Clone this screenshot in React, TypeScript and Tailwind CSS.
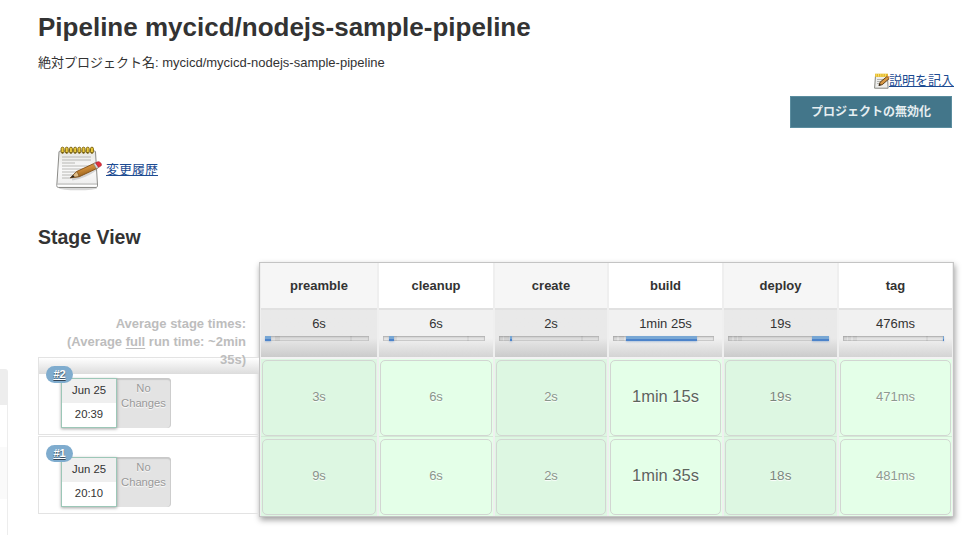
type Segment = { x: number; w: number };
type Stage = {
  name: string;
  width: string;
  average: string;
  bar: Segment;
  marks: Segment[];
  runs: string[];
  size: string;
};

const stages: Stage[] = [
  { name: "preamble", width: "w-[118px]", average: "6s", bar: { x: 0, w: 6 }, marks: [{ x: 10, w: 5 }, { x: 85, w: 2 }], runs: ["3s", "9s"], size: "text-[13px] leading-[71px] text-[#8a948b]" },
  { name: "cleanup", width: "w-[116px]", average: "6s", bar: { x: 6, w: 5 }, marks: [{ x: 11, w: 3 }, { x: 84, w: 2 }], runs: ["6s", "6s"], size: "text-[13px] leading-[71px] text-[#8a968c]" },
  { name: "create", width: "w-[114px]", average: "2s", bar: { x: 11, w: 2 }, marks: [{ x: 0, w: 4 }, { x: 5, w: 5 }, { x: 82, w: 2 }], runs: ["2s", "2s"], size: "text-[13px] leading-[71px] text-[#8a968c]" },
  { name: "build", width: "w-[115px]", average: "1min 25s", bar: { x: 13, w: 71 }, marks: [{ x: 0, w: 4 }, { x: 6, w: 5 }], runs: ["1min 15s", "1min 35s"], size: "text-[16.5px] leading-[70px] text-[#5c655d]" },
  { name: "deploy", width: "w-[115px]", average: "19s", bar: { x: 84, w: 17 }, marks: [{ x: 0, w: 4 }, { x: 6, w: 3 }, { x: 10, w: 4 }], runs: ["19s", "18s"], size: "text-[13.5px] leading-[71px] text-[#7b867d]" },
  { name: "tag", width: "w-[115px]", average: "476ms", bar: { x: 100, w: 1 }, marks: [{ x: 0, w: 4 }, { x: 5, w: 3 }, { x: 10, w: 4 }, { x: 83, w: 2 }], runs: ["471ms", "481ms"], size: "text-[13px] leading-[71px] text-[#8e9a90]" },
];

function NotepadLarge() {
  return (
    <svg className="block shrink-0" width="48" height="48" viewBox="-1 -1.5 48 48">
      <defs>
        <linearGradient id="paper" x1="0" y1="0" x2="0" y2="1">
          <stop offset="0" stopColor="#e6e6e3" />
          <stop offset="0.5" stopColor="#fafafa" />
          <stop offset="1" stopColor="#ececec" />
        </linearGradient>
        <linearGradient id="wood" x1="0" y1="0" x2="0.5" y2="1">
          <stop offset="0" stopColor="#e8b56b" />
          <stop offset="0.5" stopColor="#cf8d3a" />
          <stop offset="1" stopColor="#8f5915" />
        </linearGradient>
      </defs>
      <ellipse cx="22" cy="41.8" rx="19" ry="2" fill="#bcbcbc" opacity="0.6" />
      <path d="M4.5 4.5h34q1 0 1 1l2 33q0 2.5-1.5 2.5H2.5Q.7 41 .8 39L3 5.5q0-1 1.5-1z" fill="url(#paper)" stroke="#8b8b88" />
      <path d="M1.5 37.5h39.5" stroke="#b5b5b3" />
      <path d="M1.5 39.2h39.5" stroke="#fff" strokeWidth="1.5" />
      <path d="M6 10.5h29M6 13.5h29M6 16.5h13M6 19.5h29M6 22.5h27M6 25.5h24M6 28.5h17M6 31.5h9" stroke="#b1b1ae" strokeWidth="0.9" />
      {[6.5, 10.7, 14.9, 19.1, 23.3, 27.5, 31.7, 35.9].map((x) => (
        <g key={x}>
          <rect x={x - 1.4} y="0.7" width="2.9" height="6" rx="1.4" fill="#e9c93c" stroke="#806713" strokeWidth="1" />
          <circle cx={x} cy="6.3" r="0.8" fill="#665313" />
        </g>
      ))}
      <path d="M16 32.5q13-2 24-10" stroke="#555" strokeWidth="3" opacity="0.22" fill="none" />
      <path d="M14.5 31.3 20.5 25.1l18.5-8.6 2.8 5-18.5 8.7z" fill="url(#wood)" stroke="#815018" strokeWidth="0.9" />
      <path d="m14.5 31.3 6-6.2 1.7 2.3.8 2.6z" fill="#e0be89" stroke="#6f4616" strokeWidth="0.6" />
      <path d="m14.2 31.6 2.9-3.2 1.5 2.1z" fill="#292521" />
      <path d="m37.6 17.2 2.4-1.1 2.9 4.8-2.5 1.2z" fill="#d7d9dc" stroke="#858585" strokeWidth="0.6" />
      <path d="m39.5 16.3 2.5-1.1c2-.5 4.4 2.7 3.1 4.1l-2.6 1.5z" fill="#e3303d" stroke="#9d1825" strokeWidth="0.6" />
    </svg>
  );
}

function NotepadSmall() {
  return (
    <svg className="block shrink-0" width="16" height="16" viewBox="0 0 16 16">
      <path d="M1.5 2.5h12l.6 12.7H.6z" fill="#eeeeec" stroke="#85857f" />
      <path d="M3 6.5h7M3 8.5h5M3 10.5h3" stroke="#b4b4b0" />
      <path d="M1 2.3h13" stroke="#e4b72a" strokeWidth="3.2" />
      <path d="M2.2.9v2.7M4.5.9v2.7M6.8.9v2.7M9.1.9v2.7M11.4.9v2.7" stroke="#fff08b" strokeWidth="0.7" />
      <path d="m5 12.4 1.2-3.3 6.6-5.4 2.3 2-6.9 6z" fill="#d79743" stroke="#5f401c" />
      <path d="m4.6 12.9.7-2.3 1.7 1.5z" fill="#2b241c" />
      <path d="m12.4 3.8 1.2-1q1.5.5 1.9 2l-1 1z" fill="#c5803a" />
    </svg>
  );
}

function RunRow({ id, time, first }: { id: string; time: string; first?: boolean }) {
  return (
    <div className="relative h-[78px] border border-r-0 border-[#e3e3e3] pt-[20px] pl-[22px]">
      {first && <div className="absolute inset-x-0 top-0 -z-10 h-[16px] bg-gradient-to-b from-white to-[#dcdcdc]" />}
      <div className="flex h-[50px]">
        <div className="z-[1] w-[56px] border border-[#9cc7b7] bg-white text-center text-[11.3px] text-[#333] shadow-[0_1px_3px_rgba(0,0,0,0.35)]">
          <div className="h-[24px] bg-[#efefef] leading-[23px]">Jun 25</div>
          <div className="h-[24px] leading-[23px]">{time}</div>
        </div>
        <div className="-ml-px w-[55px] rounded-r-[4px] bg-[#e3e3e3] pt-[3px] text-center text-[11.2px] leading-[15px] text-[#999] shadow-[inset_0_2px_1px_#c9c9c9,inset_-1px_0_0_#cecece] [text-shadow:0_1px_1px_white]">
          No<br />Changes
        </div>
      </div>
      <a className="absolute top-[8px] left-[7px] z-[2] h-[17px] w-[27px] rounded-full bg-[#7facce] text-center text-[11px] leading-[17px] font-bold text-white underline [text-shadow:0_1px_1px_#345]">{id}</a>
    </div>
  );
}

function StageColumn({ stage, index }: { stage: Stage; index: number }) {
  const odd = index % 2 === 0;
  return (
    <div className={`${stage.width} shrink-0 text-center ${odd ? "bg-[#ddf7e2]" : "bg-[#e4ffe8]"} border-x border-[#efefef]`}>
      <div className={`h-[45px] text-[13px] leading-[45px] font-bold ${odd ? "bg-[#f6f6f6]" : "bg-white"}`}>{stage.name}</div>
      <div className={`h-[49px] border-t-2 border-[#e1e1e1] bg-gradient-to-b px-[4px] ${odd ? "from-[#e9e9e9] from-60% to-[#cbcbcb]" : "from-[#f1f1f1] from-60% to-[#d4d4d4]"}`}>
        <div className="h-[26px] text-[13px] leading-[27px]">{stage.average}</div>
        <div className={`relative mr-[4px] h-[5px] shadow-[inset_0_1px_2px_#b0b0b0,inset_0_0_0_1px_#cbcbcb] ${odd ? "bg-[#dedede]" : "bg-[#e5e5e5]"}`}>
          {stage.marks.map((m) => (
            <i key={m.x} className="absolute inset-y-0 bg-black/5" style={{ left: m.x, width: m.w }} />
          ))}
          <i className="absolute inset-y-0 bg-gradient-to-b from-[#78a7d4] from-50% to-[#4c83ca] to-60% shadow-[0_1px_2px_rgba(70,120,190,0.35)]" style={{ left: stage.bar.x, width: stage.bar.w }} />
        </div>
      </div>
      <div className="h-[2px] bg-[#f3f3f3]" />
      {stage.runs.map((run, i) => (
        <div key={run + i} className={`px-px ${i === 0 ? "h-[78px] border-b border-[#d4e8d6] pt-px" : "h-[79px] pt-[2px]"}`}>
          <div className={`h-[76px] rounded-[5px] border border-[#d2d6d2] [text-shadow:0_1px_1px_white] ${stage.size}`}>{run}</div>
        </div>
      ))}
    </div>
  );
}

export default function App() {
  return (
    <div className="flex h-[535px] w-[965px] overflow-hidden bg-white font-['Liberation_Sans','Noto_Sans_CJK_JP',sans-serif] text-[13px] text-[#333]">
      <aside className="w-[8px] shrink-0 pt-[369px]">
        <div className="h-[36px] rounded-tr-[3px] bg-[#ededed]" />
        <div className="h-[42px] border-r border-[#ededed]" />
        <div className="h-[52px] border-r border-[#ededed] bg-[#fafafa]" />
        <div className="h-[36px] border-r border-[#ededed]" />
      </aside>
      <main className="flex w-[957px] flex-col pt-[12px] pl-[30px]">
        <h1 className="h-[30px] text-[26px] leading-[30px] font-bold whitespace-nowrap">Pipeline mycicd/nodejs-sample-pipeline</h1>
        <div className="mt-[11px] h-[19px] leading-[20px] whitespace-nowrap">絶対プロジェクト名: mycicd/mycicd-nodejs-sample-pipeline</div>
        <div className="flex h-[20px] items-start justify-end pt-px pr-[11px]">
          <div className="-mr-px"><NotepadSmall /></div>
          <a className="text-[13px] leading-[16px] text-[#1c4b92] underline">説明を記入</a>
        </div>
        <div className="mt-[4px] mr-[13px] h-[32px] w-[162px] self-end border border-[#5b8d9f] bg-[#43768a] text-center text-[12px] leading-[31px] font-bold text-[#e6eef1]">プロジェクトの無効化</div>
        <div className="mt-[17px] flex h-[48px] items-center gap-[3px] pl-[17px]">
          <NotepadLarge />
          <a className="pt-[2px] text-[13px] leading-[16px] text-[#1c4b92] underline">変更履歴</a>
        </div>
        <h2 className="mt-[32px] h-[25px] text-[19.5px] leading-[24px] font-bold">Stage View</h2>
        <div className="mt-[12px] flex">
          <div className="isolate w-[221px] shrink-0 pt-[53px]">
            <div className="relative z-[1] h-[42px] pr-[13px] pl-[20px] text-right leading-[18px] font-bold text-[#bdbdbd]">
              Average stage times:<br />(Average <span className="underline underline-offset-2">full</span> run time: ~2min 35s)
            </div>
            <RunRow id="#2" time="20:39" first />
            <div className="h-px" />
            <RunRow id="#1" time="20:10" />
          </div>
          <div className="flex h-[255px] w-[695px] border border-[#c4c4c4] shadow-[1px_3px_6px_rgba(0,0,0,0.38)]">
            {stages.map((s, i) => <StageColumn key={s.name} stage={s} index={i} />)}
          </div>
        </div>
      </main>
    </div>
  );
}
